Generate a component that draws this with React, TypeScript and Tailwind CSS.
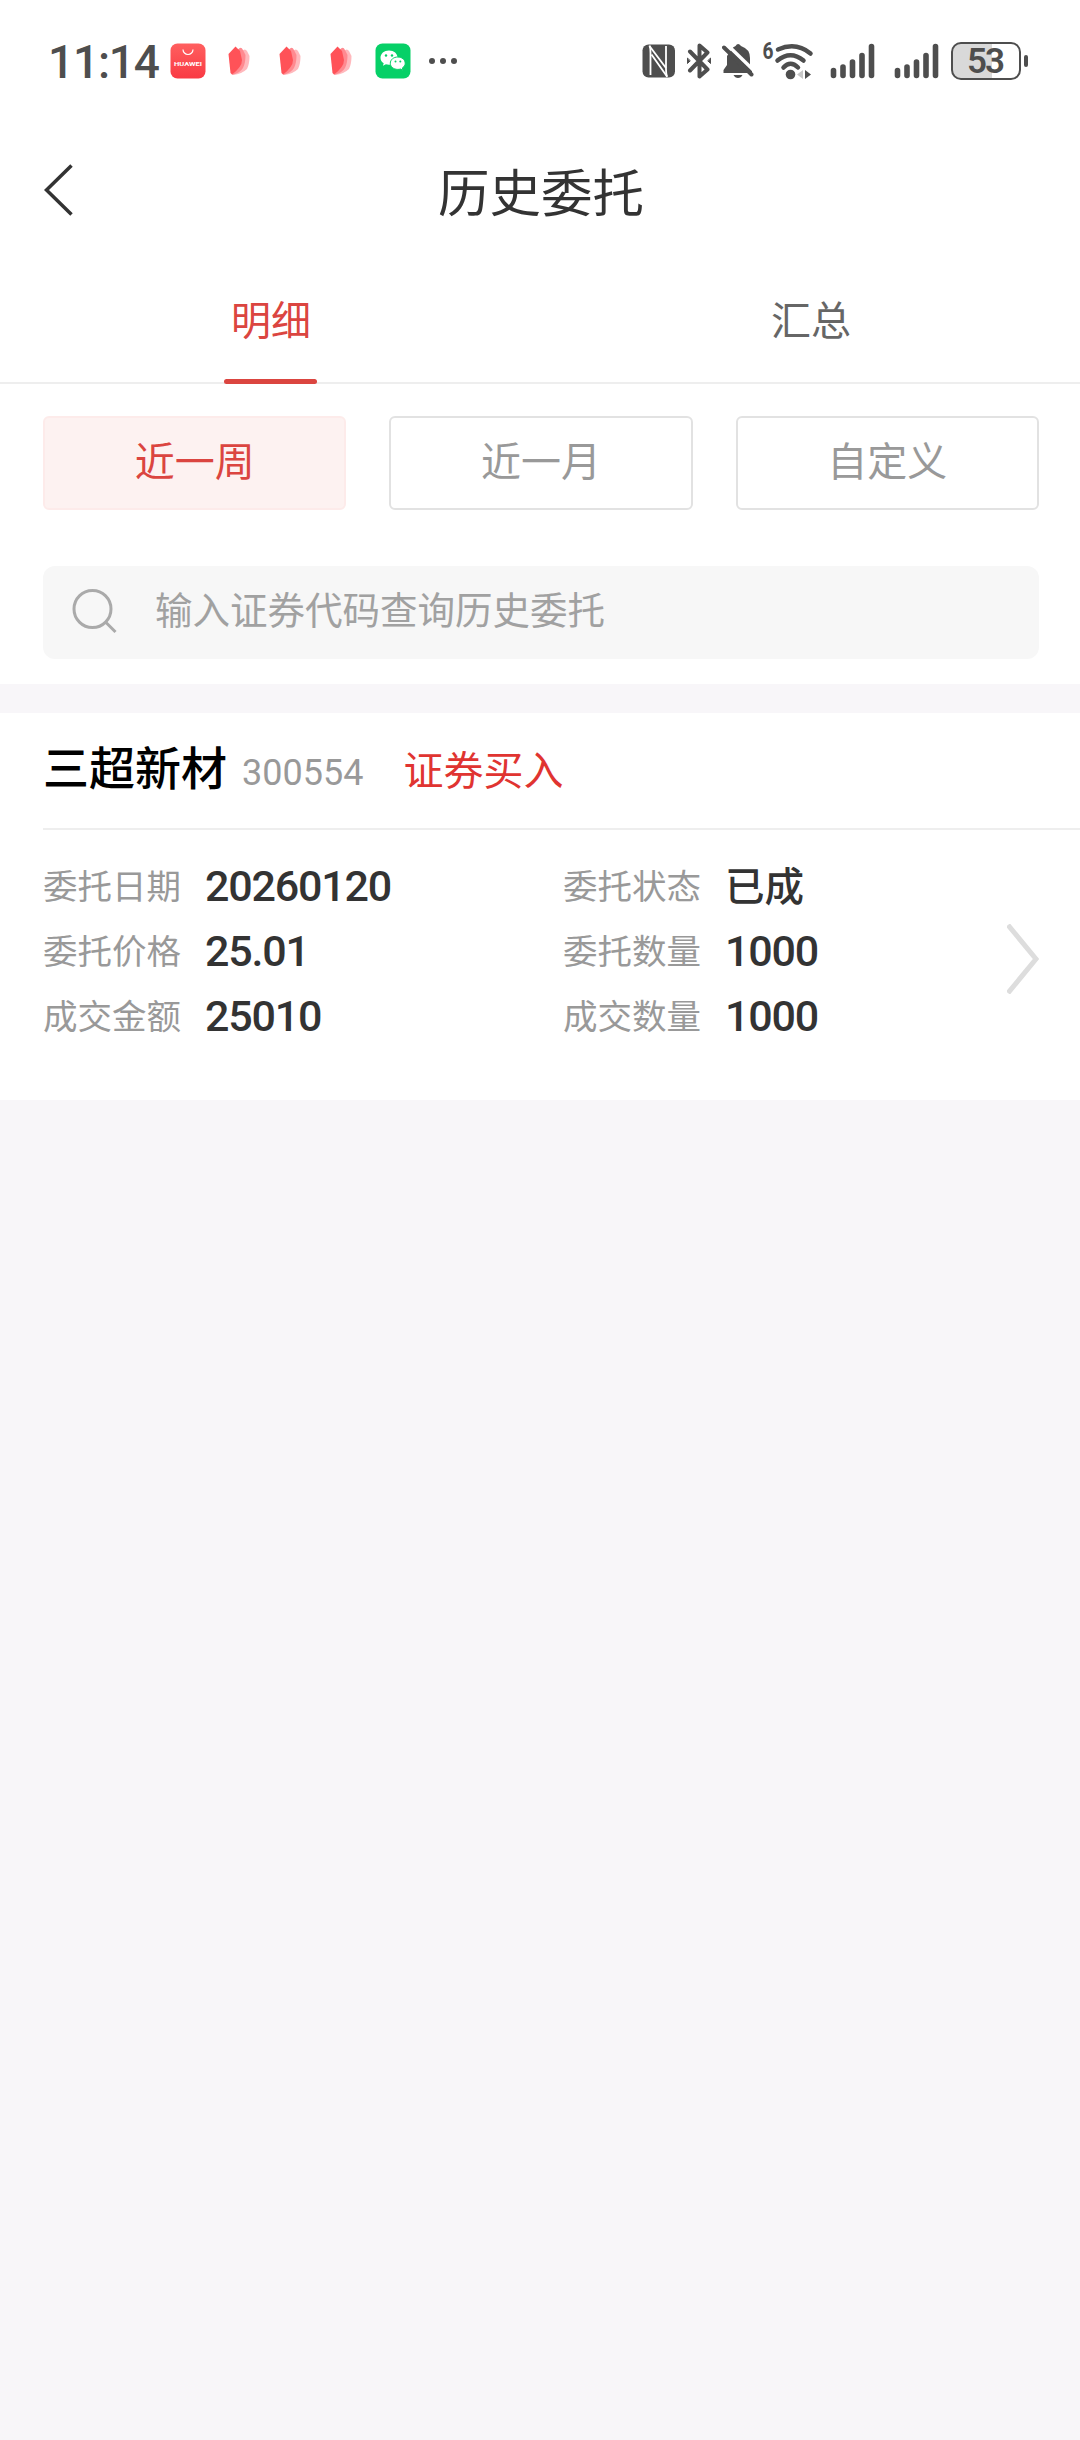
import type { ReactNode } from "react";

const periods = ["近一周", "近一月", "自定义"];

const order = {
  name: "三超新材",
  code: "300554",
  side: "证券买入",
  left: [
    { label: "委托日期", value: "20260120" },
    { label: "委托价格", value: "25.01" },
    { label: "成交金额", value: "25010" },
  ],
  right: [
    { label: "委托状态", value: "已成" },
    { label: "委托数量", value: "1000" },
    { label: "成交数量", value: "1000" },
  ],
};

function HuaweiIcon() {
  return (
    <svg width="36" height="36" viewBox="0 0 36 36">
      <defs>
        <linearGradient id="hw" x1="0" y1="0" x2="0" y2="1">
          <stop offset="0" stopColor="#ff5f5f" />
          <stop offset="1" stopColor="#f93a44" />
        </linearGradient>
      </defs>
      <rect x="0.5" y="0.5" width="35" height="35" rx="7" fill="url(#hw)" />
      <path d="M13 6.5a5 5 0 0 0 10 0" fill="none" stroke="#fff" strokeWidth="1.2" />
      <text
        x="18"
        y="22.5"
        textAnchor="middle"
        textLength="28"
        lengthAdjust="spacingAndGlyphs"
        className="fill-white font-['Roboto',sans-serif] text-[6px] font-bold"
      >
        HUAWEI
      </text>
    </svg>
  );
}

function PetalIcon() {
  return (
    <svg width="22" height="30" viewBox="0 0 22 30">
      <path d="M14 5q3-3 5 0l2.500 5q0 8-2.500 13-5 5-14 6z" fill="#ffb9bd" />
      <path d="M10 3.500Q13 0 15 4l2.500 5q0 8-2.500 13-3 5-11 7z" fill="#ff8a90" />
      <path d="M0.500 8 7.500 0.500 12 5l2 9q0 7-10 14.500L2.500 27z" fill="#ff5258" />
    </svg>
  );
}

function WechatIcon() {
  return (
    <svg width="36" height="36" viewBox="0 0 36 36">
      <rect x="0.5" y="0.5" width="35" height="35" rx="7" fill="#06d067" />
      <path d="M14 7.5c-5 0-8.500 3.200-8.500 7.200 0 2.300 1.200 4.200 3.200 5.500l-.8 2.600 3-1.500c1 .3 2 .4 3.100.4 5 0 8.600-3 8.600-7s-3.600-7.200-8.600-7.200z" fill="#fff" />
      <path d="M22.800 14c-4.300 0-7.500 2.800-7.500 6.200s3.200 6.200 7.500 6.200c1 0 1.800-.1 2.600-.4l2.600 1.400-.7-2.400c1.800-1.100 2.900-2.800 2.900-4.800 0-3.400-3.200-6.200-7.400-6.200z" fill="#fff" stroke="#06d067" strokeWidth="1" />
      <g fill="#06d067">
        <circle cx="11" cy="12.500" r="1.200" />
        <circle cx="17" cy="12.500" r="1.200" />
        <circle cx="20.500" cy="18.500" r="1" />
        <circle cx="25.300" cy="18.500" r="1" />
      </g>
    </svg>
  );
}

function NfcIcon() {
  return (
    <svg width="34" height="34" viewBox="0 0 34 34">
      <rect x="0.500" y="0.500" width="32.500" height="33" rx="6" fill="#4e4e4e" />
      <g fill="none" stroke="#fff" strokeWidth="1.800">
        <path d="M7.500 1.500Q8.500 4 8.500 9v22M25 33Q24 30 24 25V2" />
        <path d="M7.500 2 24 24M9.500 10.500 25 32.500" />
      </g>
    </svg>
  );
}

function BluetoothIcon() {
  return (
    <svg width="26" height="36" viewBox="0 0 26 36" fill="none" stroke="#4e4e4e" strokeWidth="4" strokeLinejoin="round" strokeLinecap="round">
      <path d="M4 8.500 21.500 26.500 13.500 33.500V2.500L21.500 9.500 4 27.500" />
      <path d="M1.500 15.500v5l2.500-2.500zM24.500 15.500v5l-2.500-2.500z" strokeWidth="1" fill="#4e4e4e" />
    </svg>
  );
}

function MutedBellIcon() {
  return (
    <svg width="32" height="36" viewBox="0 0 32 36">
      <path d="M11 4.500 13.500 3Q16 -1 19 3q9 3 9 12v8l2 5v2H1.500v-3L5 22V13z" fill="#4e4e4e" />
      <path d="M11.500 32h9q-1.500 3-4.500 3t-4.500-3z" fill="#4e4e4e" />
      <path d="M4 0.500 34 29.500" stroke="#fff" strokeWidth="3.500" />
      <path d="M2 4.500 29.500 31.500" stroke="#4e4e4e" strokeWidth="4" strokeLinecap="round" />
    </svg>
  );
}

function WifiIcon() {
  return (
    <svg width="52" height="38" viewBox="0 0 52 38" className="overflow-visible">
      <text x="-0.500" y="17" className="fill-[#4e4e4e] font-['Roboto',sans-serif] text-[24px] font-bold" textLength="11" lengthAdjust="spacingAndGlyphs">
        6
      </text>
      <g fill="none" stroke="#4e4e4e" strokeWidth="4.500" strokeLinecap="round">
        <path d="M15 7.500Q33-0.500 47.500 11.500" />
        <path d="M14.500 18.500q13-10.500 26 0" />
        <path d="M20.500 25.500q7-7.500 14.500 0" />
      </g>
      <circle cx="27.500" cy="32.500" r="4.800" fill="#4e4e4e" />
      <path d="M40 28v9l-6-4.500z" fill="#c8c8c8" />
      <path d="M42 28v9l6-4.500z" fill="#4e4e4e" />
    </svg>
  );
}

function SignalIcon() {
  return (
    <svg width="46" height="36" viewBox="0 0 46 36" stroke="#4e4e4e" strokeWidth="5.600" strokeLinecap="round">
      <path d="M3.500 27.500v5M13 24v8.500M22.500 19v13.500M32 12.500v20M41.500 3.500v29" />
    </svg>
  );
}

function Battery() {
  return (
    <div className="flex items-center gap-[3px]">
      <div className="flex h-[38px] w-[70px] items-center justify-center rounded-[10px] border-[2.500px] border-[#4e4e4e] bg-linear-to-r from-[#d9d9d9] from-[59%] to-white to-[59%] pr-0.5 text-[35px] leading-none font-semibold tracking-[-2px] text-[#4e4e4e]">
        53
      </div>
      <div className="h-3 w-1 rounded-sm bg-[#4e4e4e]" />
    </div>
  );
}

function StatusBar() {
  return (
    <div className="flex h-[124px] items-start justify-between pt-[42px] pr-[52px] pl-12 text-[#4e4e4e]">
      <div className="flex h-[38px] items-center">
        <span className="w-[122px] pt-0.5 text-[46px] leading-[38px] font-medium tracking-[-1.200px]">11:14</span>
        <HuaweiIcon />
        <div className="ml-[22px] flex gap-[29px]">
          <PetalIcon />
          <PetalIcon />
          <PetalIcon />
        </div>
        <div className="ml-[23px]">
          <WechatIcon />
        </div>
        <div className="ml-[18px] flex gap-[5px]">
          <i className="size-1.5 rounded-full bg-[#4e4e4e]" />
          <i className="size-1.5 rounded-full bg-[#4e4e4e]" />
          <i className="size-1.5 rounded-full bg-[#4e4e4e]" />
        </div>
      </div>
      <div className="flex h-[38px] items-center">
        <NfcIcon />
        <div className="ml-2.5">
          <BluetoothIcon />
        </div>
        <div className="ml-2.5">
          <MutedBellIcon />
        </div>
        <div className="ml-[9px]">
          <WifiIcon />
        </div>
        <div className="ml-[15px]">
          <SignalIcon />
        </div>
        <div className="mr-[11px] ml-[18px]">
          <SignalIcon />
        </div>
        <Battery />
      </div>
    </div>
  );
}

function Tab({ active, children }: { active?: boolean; children: ReactNode }) {
  return (
    <button
      className={`flex flex-1 flex-col items-center justify-between pt-[18px] text-[40px] leading-[60px] ${
        active ? "text-[#db4540]" : "text-[#666]"
      }`}
    >
      <span className="pl-0.5">{children}</span>
      {active && <span className="-mb-0.5 h-[5px] w-[93px] rounded-full bg-[#db4540]" />}
    </button>
  );
}

function Field({ label, value }: { label: string; value: string }) {
  return (
    <div className="flex h-[65px] items-center">
      <span className="w-[162px] text-[34.500px] text-[#999]">{label}</span>
      {/^[\d.]+$/.test(value) ? (
        <span className="-mt-0.5 text-[43px] font-medium tracking-[-1.200px] text-[#333]">{value}</span>
      ) : (
        <span className="text-[39.500px] font-medium text-[#333]">{value}</span>
      )}
    </div>
  );
}

export default function App() {
  return (
    <div className="flex h-[2440px] w-[1080px] flex-col bg-[#f8f6f9] font-['Roboto','Noto_Sans_CJK_SC',sans-serif]">
      <div className="bg-white">
        <StatusBar />

        <header className="grid h-[134px] grid-cols-[200px_1fr_200px] items-center">
          <svg width="32" height="54" viewBox="0 0 32 54" className="-mt-0.5 ml-[43px]">
            <path d="M28.500 2.500 3.500 27l25 24.500" fill="none" stroke="#333" strokeWidth="3.500" />
          </svg>
          <h1 className="pt-[7px] pl-0.5 text-center text-[51.500px] text-[#333]">历史委托</h1>
        </header>

        <nav className="flex h-[126px] border-b-2 border-[#eee] pt-4">
          <Tab active>明细</Tab>
          <Tab>汇总</Tab>
        </nav>

        <div className="grid grid-cols-3 gap-[43px] pt-8 pr-[41px] pl-[43px]">
          {periods.map((p, i) => (
            <button
              key={p}
              className={`h-[94px] rounded-md border-2 text-[40px] ${
                i === 0 ? "border-[#fdebea] bg-[#fdf2f1] text-[#db4540]" : "border-[#e2e2e2] text-[#999]"
              }`}
            >
              {p}
            </button>
          ))}
        </div>

        <div className="pt-14 pr-[41px] pb-[25px] pl-[43px]">
          <div className="flex h-[93px] items-center rounded-xl bg-[#f7f7f7] pl-[29px]">
            <svg width="46" height="46" viewBox="0 0 46 46" fill="none" stroke="#aaa" strokeWidth="3" className="-mt-1">
              <circle cx="20.500" cy="21" r="18.500" />
              <path d="m33.500 34 10 10" />
            </svg>
            <span className="-mt-0.5 ml-[37px] text-[37.500px] text-[#a1a1a1]">输入证券代码查询历史委托</span>
          </div>
        </div>
      </div>

      <section className="mt-[29px] h-[387px] bg-white">
        <div className="ml-[43px] flex h-[117px] items-center border-b-2 border-[#eee]">
          <span className="-mt-0.5 text-[46px] font-medium text-black">{order.name}</span>
          <span className="ml-[15px] pt-1 text-[36px] text-[#999]">{order.code}</span>
          <span className="ml-10 pt-0.5 text-[40px] text-[#e03431]">{order.side}</span>
        </div>
        <div className="flex pt-[25px] pl-[43px]">
          <div className="w-[520px]">
            {order.left.map((f) => (
              <Field key={f.label} {...f} />
            ))}
          </div>
          <div className="w-[444px]">
            {order.right.map((f) => (
              <Field key={f.label} {...f} />
            ))}
          </div>
          <svg width="32" height="70" viewBox="0 0 32 70" className="mt-[69px]">
            <path d="M1 1 29 35 1 69" fill="none" stroke="#ddd" strokeWidth="5" />
          </svg>
        </div>
      </section>
    </div>
  );
}
